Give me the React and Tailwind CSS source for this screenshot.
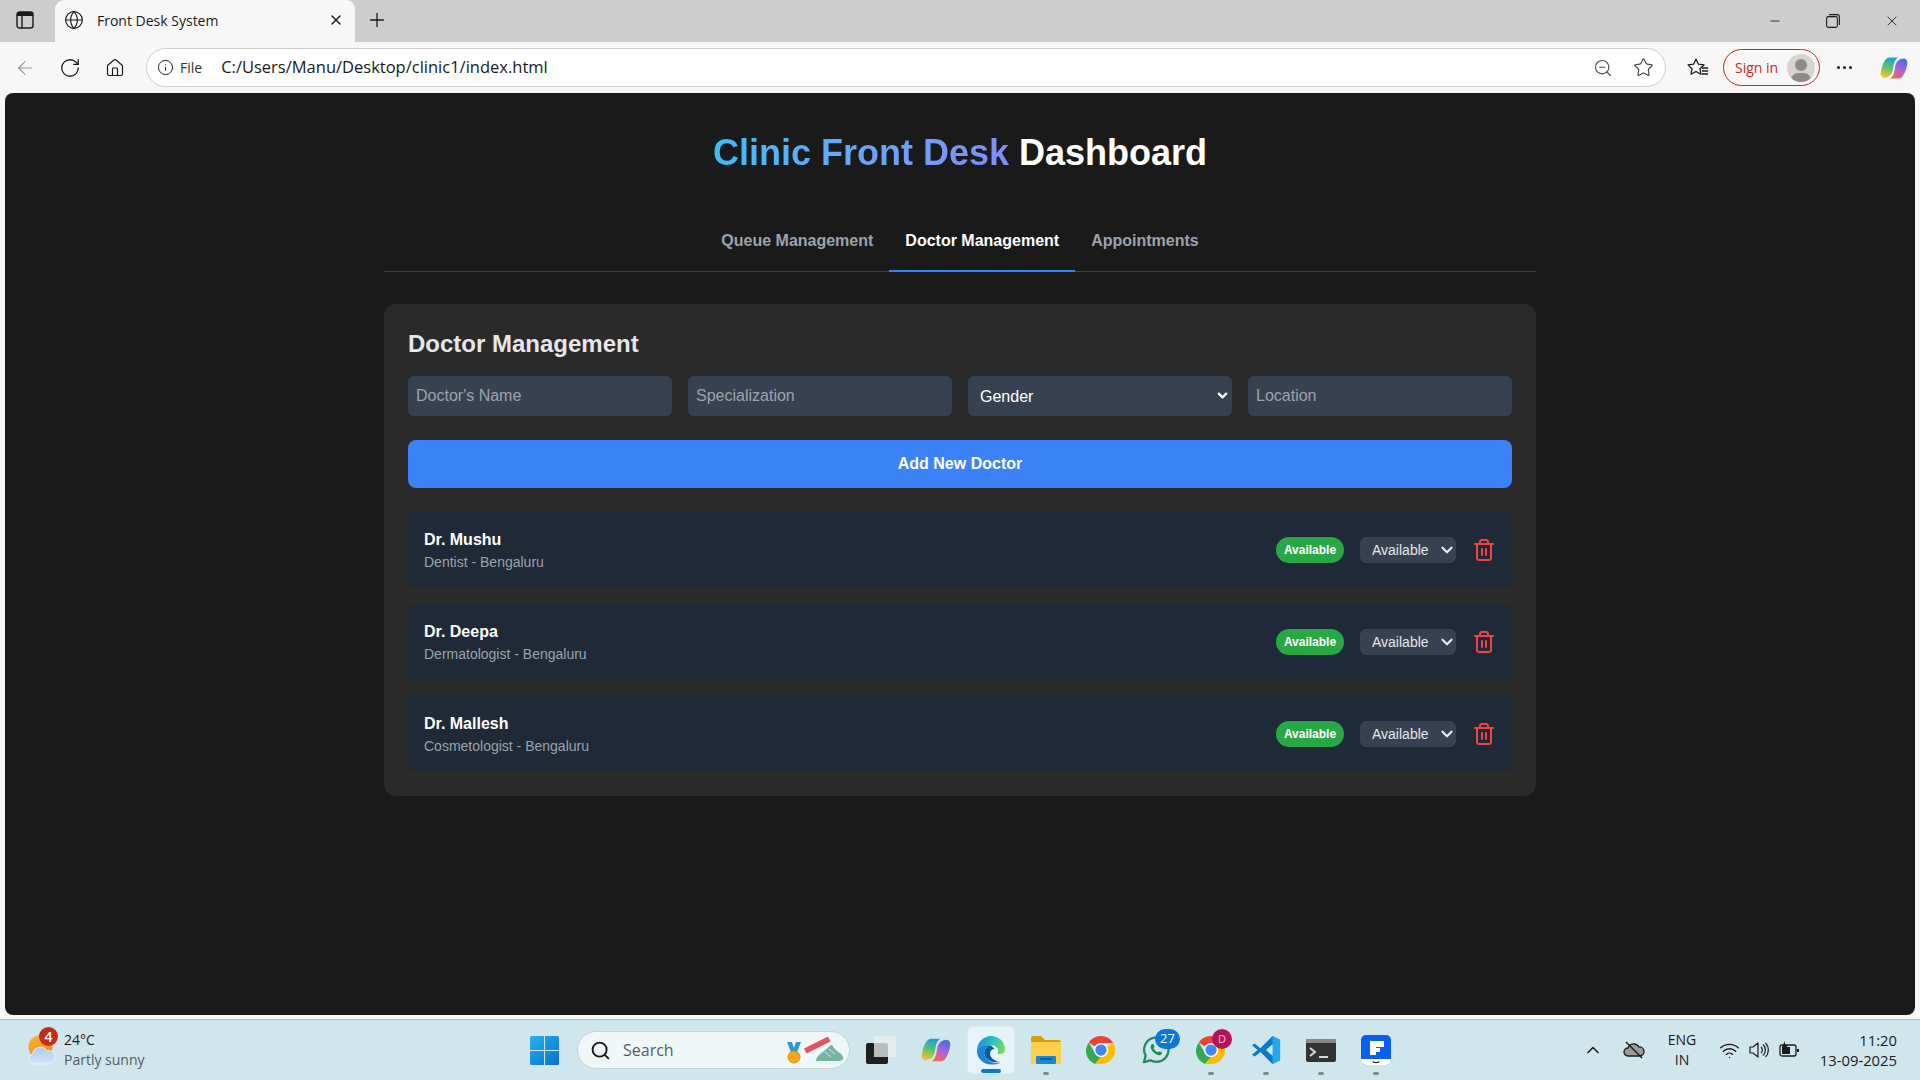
import { useState } from 'react'
import {
  ArrowLeft, RotateCw, Home, Info, ZoomOut, Star, X, Plus, Globe, Minus, Search,
  ChevronUp, ChevronDown, Wifi, Trash2,
} from 'lucide-react'

const doctors = [
  { name: 'Dr. Mushu', detail: 'Dentist - Bengaluru' },
  { name: 'Dr. Deepa', detail: 'Dermatologist - Bengaluru' },
  { name: 'Dr. Mallesh', detail: 'Cosmetologist - Bengaluru' },
]

function CopilotIcon({ size = 30, id = 'cp' }) {
  return (
    <svg width={size} height={size} viewBox="0 0 32 32" aria-hidden>
      <defs>
        <linearGradient id={`${id}a`} x1="0.6" y1="0" x2="0.3" y2="1">
          <stop offset="0" stopColor="#1c9be6" />
          <stop offset="0.5" stopColor="#5cc36a" />
          <stop offset="1" stopColor="#f5c52e" />
        </linearGradient>
        <linearGradient id={`${id}b`} x1="0.7" y1="0" x2="0.2" y2="1">
          <stop offset="0" stopColor="#3f6fe6" />
          <stop offset="0.5" stopColor="#b45fdc" />
          <stop offset="1" stopColor="#f5703c" />
        </linearGradient>
      </defs>
      <path d="M11 4H21C18 5 17 8 16 11L14.500 19C13.500 23 10 27 5 27C2 27 0 24 1 20C2 14 4 9 6 7C7 5 9 4 11 4Z" fill={`url(#${id}a)`} />
      <path d="M21 28H11C14 27 15 24 16 21L17.500 13C18.500 9 22 5 27 5C30 5 32 8 31 12C30 18 28 23 26 25C25 27 23 28 21 28Z" fill={`url(#${id}b)`} />
    </svg>
  )
}

function EdgeIcon() {
  return (
    <svg width="30" height="30" viewBox="0 0 32 32" aria-hidden>
      <defs>
        <linearGradient id="edgea" x1="0" y1="0.3" x2="1" y2="0.6">
          <stop offset="0" stopColor="#1a8fd8" />
          <stop offset="0.55" stopColor="#2fc4c0" />
          <stop offset="1" stopColor="#78dc58" />
        </linearGradient>
      </defs>
      <path d="M1 17C1 8 8 1 16 1C25 1 31 8 31 15C31 20 27 21 23 20C25 16 22 11 16 11C9 11 3 14 1 17Z" fill="url(#edgea)" />
      <path d="M1 17C3 13 9 10 15 11C10 13 8 17 9 21C11 27 17 30 23 30C24 30 25 29.800 26 29.500C23 31 20 31.500 16 31.500C8 31.500 1 25 1 17Z" fill="#1a86d6" />
      <path d="M15 11C10 13 8 17 9 21C11 27 18 30 26 29C21 28 15 25 15 20C15 17 17 15 20 15C18 13 17 12 15 11Z" fill="#0c5aa6" />
    </svg>
  )
}

function ChromeIcon() {
  return (
    <svg width="30" height="30" viewBox="0 0 32 32" aria-hidden>
      <path d="M16 1a15 15 0 0 1 13 7.500H16a7.500 7.500 0 0 0-6.500 3.800L3 8A15 15 0 0 1 16 1z" fill="#ea4335" />
      <path d="M3 8l6.500 11.300A7.500 7.500 0 0 0 16 23.500L9.500 30.900A15 15 0 0 1 3 8z" fill="#34a853" />
      <path d="M29 8.500A15 15 0 0 1 16 31l-6.500-.1L16 23.500a7.500 7.500 0 0 0 6.500-11.300L29 8.500z" fill="#fbbc04" />
      <circle cx="16" cy="16" r="7.500" fill="#fff" />
      <circle cx="16" cy="16" r="6" fill="#4285f4" />
    </svg>
  )
}

function WhatsappIcon() {
  return (
    <svg width="30" height="30" viewBox="0 0 32 32" fill="none" aria-hidden>
      <path d="M3 29l2-7A13 13 0 1 1 10 27z" stroke="#1f8a5b" strokeWidth="2.400" strokeLinejoin="round" />
      <path d="M11 10c1-1 2-1 2.400 0l1 2.400-1 1.600c1 2 2.500 3.400 4.600 4.500l1.600-1.200 2.400 1.200c.6.400.4 1.600-.4 2.400-1.200 1-3 1-5.600-.4-2.600-1.400-4.600-3.600-5.400-6-.5-1.600-.2-3.300.4-4.500z" fill="#1f8a5b" />
    </svg>
  )
}

function VscodeIcon() {
  return (
    <svg width="30" height="30" viewBox="0 0 32 32" aria-hidden>
      <path d="M23 1l8 4v22l-8 4-13-13-6 5-3-2 6-5-6-5 3-2 6 5z" fill="#0e7ac4" />
      <path d="M23 1l8 4v22l-8 4V22l-7-6 7-6z" fill="#23a9f2" />
      <path d="M23 10v12l-7-6z" fill="#cfe6ed" />
    </svg>
  )
}

function TaskIcon({ children, open }) {
  return (
    <div className="relative flex h-12 w-[55px] items-center justify-center">
      {children}
      {open ? <span className="absolute bottom-0 left-1/2 h-[3px] w-1.5 -translate-x-1/2 translate-y-[1px] rounded-full bg-[#7a8a90]" /> : null}
    </div>
  )
}

function Taskbar() {
  return (
    <div className="flex h-[61px] shrink-0 items-center border-t border-[#a9bcc6] bg-[#cfe6ed] font-['Open_Sans',sans-serif] text-[#1a1a1a]">
      {/* weather */}
      <div className="flex w-[530px] items-center pl-[28px]">
        <div className="relative h-[34px] w-[34px]">
          <svg width="28" height="30" viewBox="0 0 28 30" className="mt-[2px]" aria-hidden>
            <defs>
              <linearGradient id="sun" x1="0" y1="0" x2="0.6" y2="1">
                <stop offset="0" stopColor="#f9b732" />
                <stop offset="1" stopColor="#ee8a1e" />
              </linearGradient>
              <linearGradient id="cloud" x1="0" y1="0" x2="0" y2="1">
                <stop offset="0" stopColor="#a9ccf0" />
                <stop offset="1" stopColor="#d6e4f7" />
              </linearGradient>
            </defs>
            <circle cx="12.500" cy="12" r="12" fill="url(#sun)" />
            <path d="M6 29a5 5 0 0 1-1.500-9.700A8 8 0 0 1 19 15.500a6.800 6.800 0 0 1 2.500 13.500z" fill="url(#cloud)" stroke="#eef5fd" strokeWidth="0.800" />
          </svg>
          <span className="absolute left-[11px] -top-[6px] flex h-[19px] w-[19px] items-center justify-center rounded-full bg-[#c42b1c] text-[14px] font-semibold text-white">4</span>
        </div>
        <div className="ml-[2px] text-[14px] leading-[20px]">
          <div>24°C</div>
          <div className="text-[#555d60]">Partly sunny</div>
        </div>
      </div>

      {/* start + search */}
      <svg width="29" height="29" viewBox="0 0 29 29" aria-hidden>
        <defs>
          <linearGradient id="win" x1="0" y1="0" x2="1" y2="1">
            <stop offset="0" stopColor="#25b2f0" />
            <stop offset="1" stopColor="#0a6fd0" />
          </linearGradient>
        </defs>
        <path d="M0 1.500a1.500 1.500 0 0 1 1.500-1.500H14v14H0zM15 0h12.500A1.500 1.500 0 0 1 29 1.500V14H15zM0 15h14v14H1.500A1.500 1.500 0 0 1 0 27.500zM15 15h14v12.500a1.500 1.500 0 0 1-1.500 1.500H15z" fill="url(#win)" />
      </svg>
      <div className="ml-[18px] flex h-[38px] w-[273px] items-center rounded-full border border-[#c3d5db] bg-[#eff7f9] pl-[12px] pr-[4px]">
        <Search size={21} strokeWidth={2.200} className="text-[#1a1a1a]" />
        <span className="ml-[12px] text-[16px] text-[#555d60]">Search</span>
        <svg width="60" height="34" viewBox="0 0 60 34" className="ml-auto" aria-hidden>
          <path d="M2 9h5l2 6 2-6h5l-5 13H7z" fill="#2a9ad6" />
          <circle cx="9" cy="24" r="6" fill="#f5a81c" stroke="#e08c0c" />
          <path d="M19 15.500L43 3.500l2.500 5L21.500 20.500z" fill="#e0555f" />
          <path d="M31 27c1-4 4-6 8-9 3-2 5-5 7-6 2 0 2 2 4 4 2 3 7 4 8 8 .5 3-1 4-3 4H34c-2 0-3 1-3-1z" fill="#76b5a4" />
          <path d="M32 29c8 2 18 2 26-1" stroke="#e6f2ee" strokeWidth="2" fill="none" />
          <path d="M40 19l6 5M44 16l6 5" stroke="#d6ebe4" strokeWidth="1" />
        </svg>
      </div>

      {/* pinned apps */}
      <div className="ml-[3px] flex items-center">
        <TaskIcon>
          <div className="relative h-7 w-[30px]">
            <span className="absolute bottom-0 left-0 h-[21px] w-[22px] rounded-[2px] bg-[#1f1f1f]" />
            <span className="absolute right-0 top-0 h-[21px] w-[22px] rounded-[2px] border border-[#e8eef0] bg-[#e8eef0]/80" />
            <span className="absolute left-[8px] top-[8px] h-[13px] w-[14px] bg-[#b9bdbe]" />
          </div>
        </TaskIcon>
        <TaskIcon><CopilotIcon id="tb" /></TaskIcon>
        <div className="relative ml-[4px] mr-[3px] flex h-12 w-[48px] items-center justify-center rounded-[5px] border border-[#d9eaf0] bg-[#e6f3f8]">
          <EdgeIcon />
          <span className="absolute bottom-0 left-1/2 h-[4px] w-5 -translate-x-1/2 rounded-full bg-[#0a78d4]" />
        </div>
        <TaskIcon open>
          <svg width="30" height="28" viewBox="0 0 30 28" aria-hidden>
            <path d="M0 2a2 2 0 0 1 2-2h8l4 4h14a2 2 0 0 1 2 2v2H0z" fill="#d9a00c" />
            <path d="M0 6h30v22H0z" fill="#fcd04f" />
            <rect x="5" y="20" width="20" height="8" rx="1" fill="#1a87d6" />
            <rect x="9" y="22" width="12" height="2" fill="#0d5ea8" />
          </svg>
        </TaskIcon>
        <TaskIcon><ChromeIcon /></TaskIcon>
        <div className="relative flex h-12 w-[55px] items-center justify-center">
          <WhatsappIcon />
          <span className="absolute left-[27px] top-[3px] flex h-[20px] w-[25px] items-center justify-center rounded-full bg-[#0a78d4] text-[13px] text-white">27</span>
        </div>
        <TaskIcon open>
          <ChromeIcon />
          <span className="absolute left-[29px] top-[3px] flex h-[20px] w-[20px] items-center justify-center rounded-full bg-[#b5125a] text-[11px] text-[#f3c3d8]">D</span>
        </TaskIcon>
        <TaskIcon open><VscodeIcon /></TaskIcon>
        <TaskIcon open>
          <svg width="30" height="23" viewBox="0 0 30 23" aria-hidden>
            <rect width="30" height="23" rx="2" fill="#333" />
            <path d="M0 2a2 2 0 0 1 2-2h26a2 2 0 0 1 2 2v2H0z" fill="#8a8a8a" />
            <path d="M4 9l5 4-5 4" stroke="#d8d8d8" strokeWidth="2" fill="none" />
            <path d="M13 18h9" stroke="#d8d8d8" strokeWidth="2" />
          </svg>
        </TaskIcon>
        <TaskIcon open>
          <svg width="30" height="30" viewBox="0 0 30 30" aria-hidden>
            <rect width="30" height="30" rx="5" fill="#0b5ff0" />
            <path d="M0 24h30v1a5 5 0 0 1-5 5H5a5 5 0 0 1-5-5z" fill="#fff" />
            <path d="M9 6h6v6H9zM15 6h8v6h-8zM9 12h6v8H9zM15 13h4v4h-4z" fill="#fff" />
            <path d="M12 26l1 2 1-1 1 1 1-1 1 1 1-2" stroke="#222" strokeWidth="1" fill="none" />
          </svg>
        </TaskIcon>
      </div>

      {/* tray */}
      <div className="ml-auto flex items-center pr-[23px] text-[14px]">
        <ChevronUp size={20} strokeWidth={1.800} />
        <svg width="22" height="18" viewBox="0 0 22 18" className="ml-[20px]" aria-hidden>
          <path d="M5 15a4 4 0 0 1 0-8 6 6 0 0 1 11-1 4.500 4.500 0 0 1 1 9z" fill="#9a9a9a" stroke="#1a1a1a" strokeWidth="1.300" />
          <path d="M3 1l16 16" stroke="#1a1a1a" strokeWidth="1.500" />
        </svg>
        <div className="ml-[21px] w-[32px] text-center leading-[20px]">
          <div>ENG</div>
          <div>IN</div>
        </div>
        <Wifi size={21} strokeWidth={1.600} className="ml-[21px]" />
        <svg width="20" height="18" viewBox="0 0 20 18" fill="none" stroke="#1a1a1a" strokeWidth="1.200" className="ml-[9px]" aria-hidden>
          <path d="M1 6h3l5-4v14l-5-4H1z" strokeLinejoin="round" />
          <path d="M12 6a4 4 0 0 1 0 6M14 3.500a7.500 7.500 0 0 1 0 11M16.500 2a10 10 0 0 1 0 14" />
        </svg>
        <svg width="20" height="18" viewBox="0 0 20 18" className="ml-[10px]" aria-hidden>
          <rect x="1" y="4" width="16" height="11" rx="2" fill="none" stroke="#1a1a1a" strokeWidth="1.300" />
          <rect x="3" y="6" width="8" height="7" fill="#1a1a1a" />
          <rect x="18" y="8" width="2" height="3" fill="#1a1a1a" />
          <path d="M6 0L3 6h3l-1 4 4-6H6z" fill="#1a1a1a" />
        </svg>
        <div className="ml-[10px] w-[88px] text-right text-[14.800px] leading-[20px]">
          <div>11:20</div>
          <div>13-09-2025</div>
        </div>
      </div>
    </div>
  )
}

function BrowserChrome() {
  return (
    <div className="shrink-0 font-['Open_Sans',sans-serif] text-[#1a1a1a]">
      <div className="flex h-[42px] items-center bg-[#cdcdcd]">
        <div className="flex h-[42px] w-[50px] items-center justify-center pb-[2px]">
          <svg width="18" height="18" viewBox="0 0 18 18" fill="none" aria-hidden>
            <rect x="1" y="1" width="16" height="16" rx="2.500" stroke="#1a1a1a" strokeWidth="1.400" />
            <path d="M1 3.500A2.500 2.500 0 0 1 3.500 1h11A2.500 2.500 0 0 1 17 3.500V5H1z" fill="#1a1a1a" />
            <path d="M6 5v12" stroke="#1a1a1a" strokeWidth="1.400" />
          </svg>
        </div>
        <div className="ml-[5px] flex h-[42px] w-[300px] items-center rounded-t-[9px] bg-[#f7f7f7] pb-[2px] pl-[9px] pr-[11px]">
          <Globe size={20} strokeWidth={1.400} />
          <span className="ml-[13px] text-[14px]">Front Desk System</span>
          <X size={16} strokeWidth={2} className="ml-auto" />
        </div>
        <div className="flex h-[42px] w-[43px] items-center justify-center pb-[2px]">
          <Plus size={22} strokeWidth={1.400} />
        </div>
        <div className="ml-auto flex h-[42px] items-center pr-[20px]">
          <Minus size={14} strokeWidth={1.500} />
          <svg width="14" height="14" viewBox="0 0 14 14" fill="none" stroke="#1a1a1a" strokeWidth="1.100" className="ml-[44px]" aria-hidden>
            <rect x="0.600" y="2.600" width="10.800" height="10.800" rx="1.800" />
            <path d="M3 0.600h8a2.400 2.400 0 0 1 2.400 2.400v8" />
          </svg>
          <X size={16} strokeWidth={1.300} className="ml-[44px]" />
        </div>
      </div>
      <div className="flex h-[51px] items-center bg-[#f7f7f7] pr-[12px]">
        <ArrowLeft size={22} strokeWidth={1.300} className="ml-[14px] text-[#9a9a9a]" />
        <RotateCw size={22} strokeWidth={1.400} className="ml-[23px]" />
        <Home size={20} strokeWidth={1.400} className="ml-[24px]" />
        <div className="ml-[21px] flex h-[39px] flex-1 items-center rounded-full border border-[#cfcfcf] bg-white pl-[10px] pr-[11px]">
          <Info size={17} strokeWidth={1.400} />
          <span className="ml-[6px] text-[14px] text-[#333]">File</span>
          <span className="ml-[19px] text-[16.500px]">C:/Users/Manu/Desktop/clinic1/index.html</span>
          <ZoomOut size={20} strokeWidth={1.300} className="ml-auto text-[#444]" />
          <Star size={21} strokeWidth={1.300} className="ml-[20px] text-[#444]" />
        </div>
        <svg width="22" height="22" viewBox="0 0 22 22" fill="none" stroke="#1a1a1a" strokeWidth="1.300" className="ml-[21px]" aria-hidden>
          <path d="M9 2l2.400 5.200 5.600.7-4.100 3.800 1 5.600L9 14.500l-5 2.800 1-5.600L1 7.900l5.600-.7z" strokeLinejoin="round" />
          <path d="M15 11h6M15 14h6M15 17h6" />
        </svg>
        <div className="ml-[14px] flex h-[37px] w-[97px] items-center justify-between rounded-full border-[1.500px] border-[#c42b1c] pl-[11px] pr-[4px]">
          <span className="text-[14px] text-[#c42b1c]">Sign in</span>
          <span className="relative h-[28px] w-[28px] overflow-hidden rounded-full bg-[#d5d4d0]">
            <span className="absolute left-[8px] top-[5px] h-[12px] w-[12px] rounded-full bg-[#8e8c87]" />
            <span className="absolute left-[4px] top-[19px] h-[14px] w-[20px] rounded-full bg-[#8e8c87]" />
          </span>
        </div>
        <div className="ml-[17px] flex gap-[3px]">
          <span className="h-[3px] w-[3px] rounded-full bg-[#1a1a1a]" />
          <span className="h-[3px] w-[3px] rounded-full bg-[#1a1a1a]" />
          <span className="h-[3px] w-[3px] rounded-full bg-[#1a1a1a]" />
        </div>
        <div className="ml-[28px]"><CopilotIcon size={28} id="br" /></div>
      </div>
    </div>
  )
}

function DoctorRow({ doctor }) {
  return (
    <div className="flex h-[76px] items-center rounded-lg bg-[#1f2937] px-4">
      <div className="flex-1">
        <p className="text-[16px] leading-[24px] font-bold text-white">{doctor.name}</p>
        <p className="text-[14px] leading-[20px] text-[#9ca3af]">{doctor.detail}</p>
      </div>
      <span className="flex h-[26px] w-[68px] items-center justify-center rounded-full bg-[#28a745] text-[12px] font-bold text-white">Available</span>
      <div className="relative ml-4 h-[26px] w-[96px]">
        <select defaultValue="Available" className="h-full w-full appearance-none rounded-md bg-[#374151] pl-3 text-[14px] text-[#e5e7eb] outline-none">
          <option>Available</option>
          <option>Busy</option>
          <option>Off Duty</option>
        </select>
        <ChevronDown size={18} strokeWidth={3} className="pointer-events-none absolute right-0 top-[4px] text-[#e5e7eb]" />
      </div>
      <button type="button" className="ml-[16px] text-[#ef4444]">
        <Trash2 size={24} strokeWidth={2} className="block" />
      </button>
    </div>
  )
}

export default function App() {
  const [tab, setTab] = useState('Doctor Management')
  const inputClass =
    'h-10 min-w-0 rounded-md bg-[#374151] px-2 text-[16px] text-white placeholder:text-[#9ca3af] outline-none'

  return (
    <div className="flex h-screen flex-col overflow-hidden bg-[#f7f7f7] font-['Liberation_Sans',Arial,sans-serif]">
      <BrowserChrome />
      <main className="mx-[5px] mb-[4px] flex-1 rounded-[8px] bg-[#1a1a1a] pt-[40px]">
        <div className="mx-auto w-[1152px]">
          <h1 className="mb-[40px] text-center text-[36px] leading-[40px] font-bold text-white">
            <span className="bg-gradient-to-r from-[#38bdf8] to-[#818cf8] bg-clip-text text-transparent">Clinic Front Desk</span> Dashboard
          </h1>
          <nav className="flex justify-center border-b border-[#374151]">
            {['Queue Management', 'Doctor Management', 'Appointments'].map((t) => (
              <button
                key={t}
                type="button"
                onClick={() => setTab(t)}
                className={`-mb-px h-[59px] border-b-2 px-4 pb-[2px] text-[16px] font-bold ${
                  t === tab ? 'border-[#3b82f6] text-white' : 'border-transparent text-[#9ca3af]'
                }`}
              >
                {t}
              </button>
            ))}
          </nav>
          <section className="mt-[32px] rounded-xl bg-[#2a2a2a] p-6">
            <h2 className="mb-[16px] text-[24px] leading-[32px] font-bold text-[#e5e7eb]">Doctor Management</h2>
            <div className="grid grid-cols-4 gap-4">
              <input className={inputClass} placeholder="Doctor's Name" />
              <input className={inputClass} placeholder="Specialization" />
              <div className="relative h-10">
                <select defaultValue="Gender" className="h-full w-full appearance-none rounded-md bg-[#374151] pl-3 pt-px text-[16px] text-white outline-none">
                  <option>Gender</option>
                  <option>Male</option>
                  <option>Female</option>
                </select>
                <ChevronDown size={15} strokeWidth={3.500} className="pointer-events-none absolute right-[2px] top-[12px] text-white" />
              </div>
              <input className={inputClass} placeholder="Location" />
            </div>
            <button type="button" className="mt-6 h-12 w-full rounded-lg bg-[#3b82f6] text-[16px] font-bold text-white">
              Add New Doctor
            </button>
            <div className="mt-6 flex flex-col gap-4">
              {doctors.map((d) => (
                <DoctorRow key={d.name} doctor={d} />
              ))}
            </div>
          </section>
        </div>
      </main>
      <Taskbar />
    </div>
  )
}
